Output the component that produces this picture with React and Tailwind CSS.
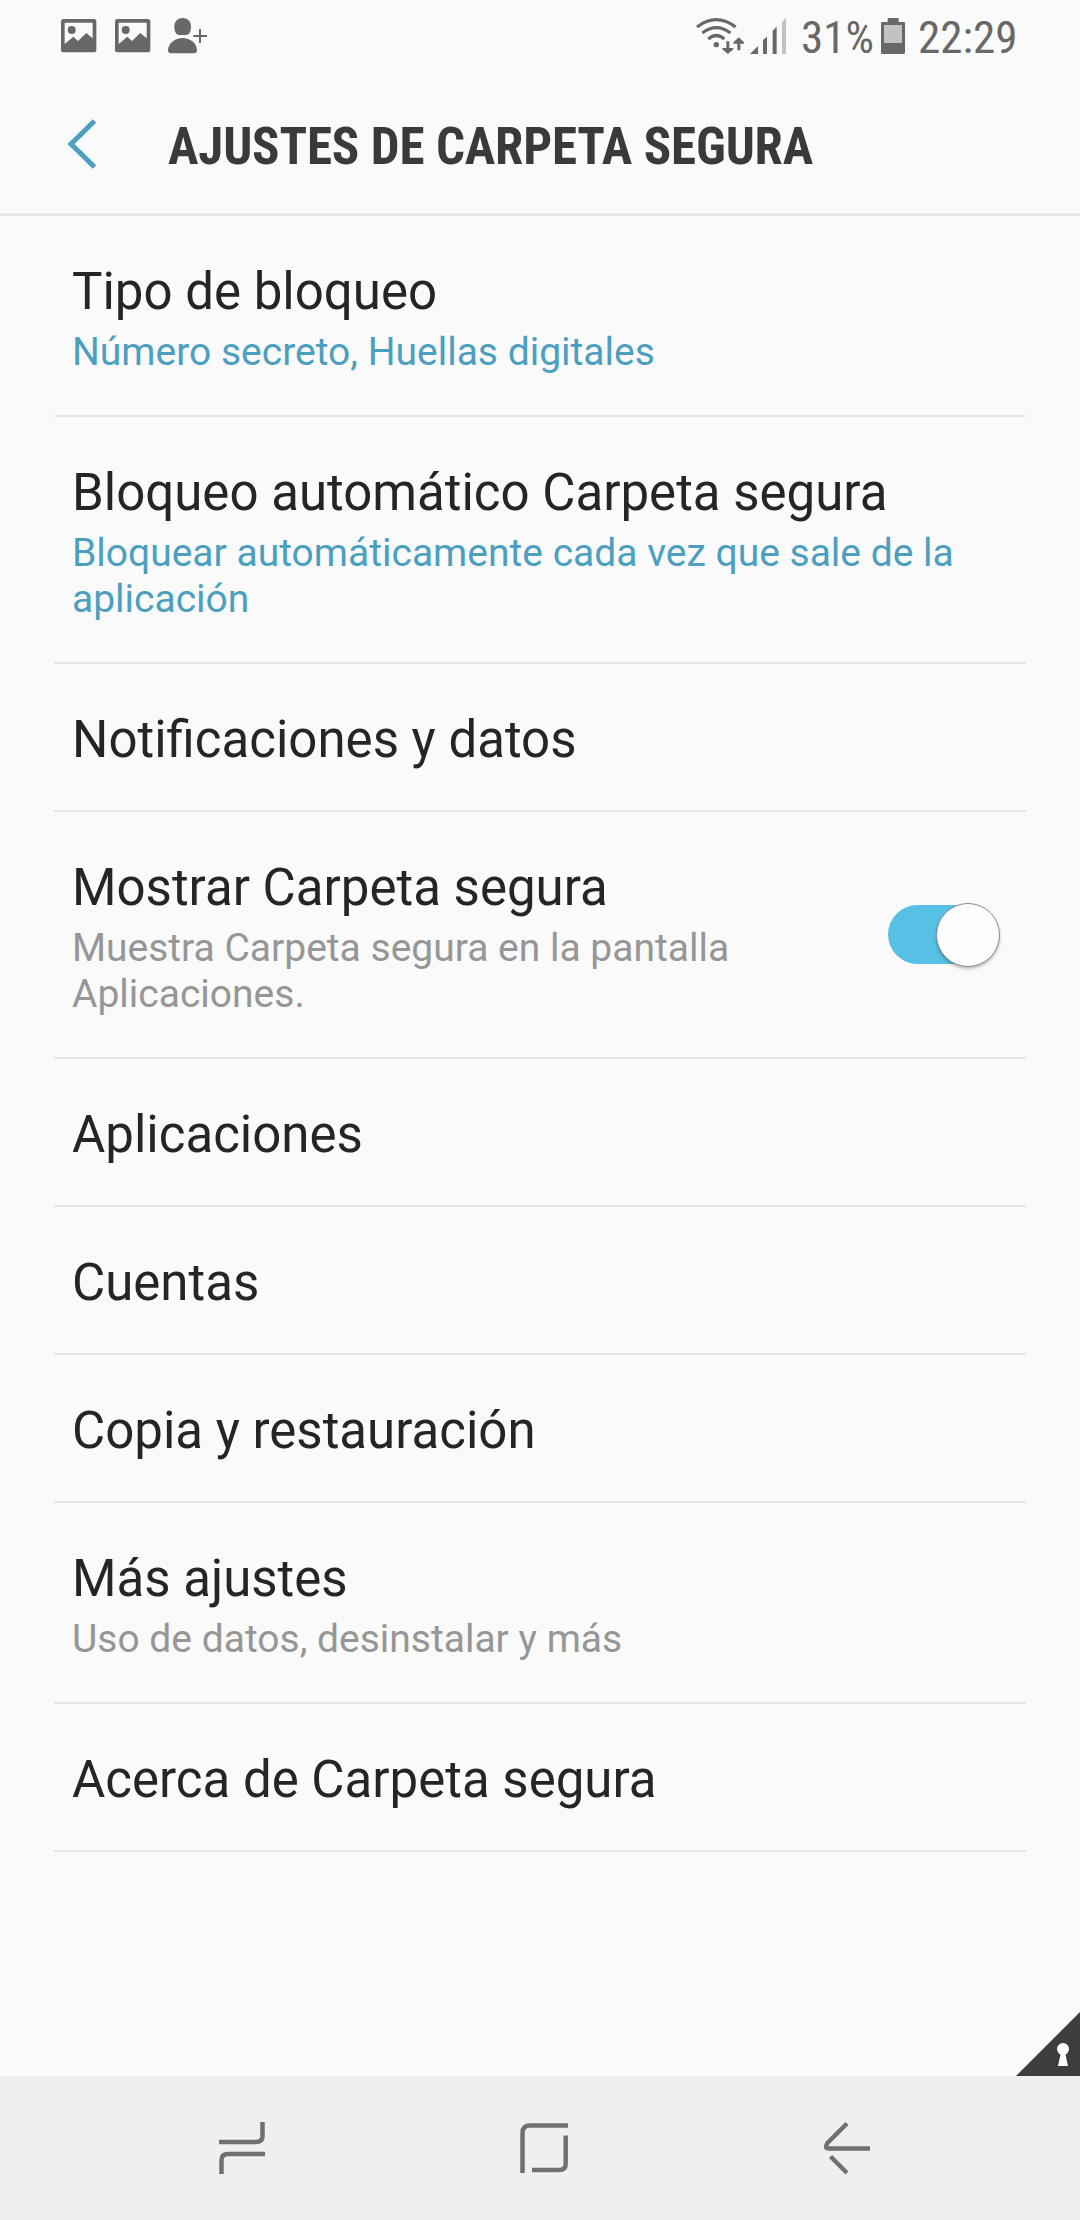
const settings = [
    { title: 'Tipo de bloqueo', sub: 'Número secreto, Huellas digitales', accent: true },
    { title: 'Bloqueo automático Carpeta segura', sub: 'Bloquear automáticamente cada vez que sale de la aplicación', accent: true },
    { title: 'Notificaciones y datos' },
    { title: 'Mostrar Carpeta segura', sub: 'Muestra Carpeta segura en la pantalla Aplicaciones.', toggle: true },
    { title: 'Aplicaciones' },
    { title: 'Cuentas' },
    { title: 'Copia y restauración' },
    { title: 'Más ajustes', sub: 'Uso de datos, desinstalar y más' },
    { title: 'Acerca de Carpeta segura' },
];

function ImageIcon() {
    return (
        <svg width="36" height="34" viewBox="0 0 108 102" className="fill-[#686868]">
            <path fillRule="evenodd" d="M8 0H98Q106 0 106 8V92Q106 100 98 100H8Q0 100 0 92V8Q0 0 8 0ZM11 11V75L37 53L51 66L76 42L95 58V11Z" />
            <circle cx="32" cy="33" r="12" />
        </svg>
    );
}

function AddUserIcon() {
    return (
        <svg width="40" height="36" viewBox="0 0 120 108" className="fill-[#686868]">
            <path d="M44 0C60 0 69 11 69 25C69 40 64 51 55 51H33C24 51 19 40 19 25C19 11 28 0 44 0Z" />
            <path d="M44 60C66 60 87 76 87 97Q87 106 78 106H9Q0 106 0 97C0 76 22 60 44 60Z" />
            <path d="M93 33H99V51H117V57H99V75H93V57H76V51H93Z" />
        </svg>
    );
}

function WifiIcon() {
    return (
        <svg width="48" height="36" viewBox="0 0 144 108" fill="none" stroke="#686868" strokeWidth="9.5">
            <path d="M3 27Q61 -17 119 27" />
            <path d="M19 45Q61 13 103 45" />
            <path d="M37 63Q61 42 85 63" />
            <circle cx="61" cy="80" r="8" fill="#686868" stroke="none" />
            <g fill="#686868" stroke="none">
                <path d="M91 70H100V90H112V94L95.5 108L79 94V90H91Z" />
                <path d="M124 97H133V77H144V73L128.500 58L112 73V77H124Z" />
            </g>
        </svg>
    );
}

function SignalIcon() {
    return (
        <svg width="36" height="36" viewBox="0 0 108 108" className="fill-[#686868]">
            <path d="M0 108L24 84V108Z" />
            <path d="M39 66L51 56V108H39Z" />
            <path d="M68 38L80 26V108H68Z" />
            <path d="M96 12L108 0V108H96Z" className="fill-[#c2c2c2]" />
        </svg>
    );
}

function BatteryIcon() {
    return (
        <svg width="24" height="36" viewBox="0 0 72 108">
            <path d="M20 4Q20 0 24 0H49Q53 0 53 4V12H68Q72 12 72 16V104Q72 108 68 108H4Q0 108 0 104V16Q0 12 4 12H20Z" fill="#686868" />
            <path d="M9 21H63V75H9Z" fill="#c2c2c2" />
        </svg>
    );
}

function StatusBar() {
    return (
        <div className="flex h-[72px] shrink-0 items-start justify-between pl-[61px] pr-[64px] pt-[18px] text-[#686868]">
            <div className="flex items-start">
                <div className="pt-px"><ImageIcon /></div>
                <div className="ml-[18px] pt-px"><ImageIcon /></div>
                <div className="ml-[17px]"><AddUserIcon /></div>
            </div>
            <div className="flex items-start">
                <WifiIcon />
                <div className="ml-[6px]"><SignalIcon /></div>
                <span className="ml-[15px] w-[71px] whitespace-nowrap text-[45px] leading-[39px] [font-stretch:75%]">31%</span>
                <div className="ml-[9px]"><BatteryIcon /></div>
                <span className="ml-[13px] w-[98px] whitespace-nowrap text-[45px] leading-[39px] [font-stretch:75%]">22:29</span>
            </div>
        </div>
    );
}

function Header() {
    return (
        <header className="flex h-[144px] shrink-0 items-center border-b-[3px] border-[#e6e6e6] pl-[67px]">
            <svg width="30" height="50" viewBox="0 0 30 50" fill="none" stroke="#4c9fbf" strokeWidth="5" className="mt-[3px]">
                <path d="M27.500 2L4 25L27.500 48" />
            </svg>
            <h1 className="ml-[71px] whitespace-nowrap pt-[9px] text-[51px] font-bold leading-[60px] tracking-[-0.16px] text-[#3a3a3a] [font-stretch:75%]">
                AJUSTES DE CARPETA SEGURA
            </h1>
        </header>
    );
}

function Toggle() {
    return (
        <div className="flex h-[59px] w-[111px] shrink-0 items-center rounded-full bg-[#57c0e5] pl-[48px]">
            <div className="h-[64px] w-[64px] shrink-0 rounded-full border border-[#8c8c8c] bg-[#fdfdfd] shadow-[0_2px_3px_rgba(0,0,0,0.25)]" />
        </div>
    );
}

function SettingRow({ title, sub, accent, toggle }) {
    return (
        <li className="flex items-center justify-between border-b-2 border-[#e6e6e6] pl-[18px] pr-[27px]">
            <div className={`pb-[40px] pt-[46px] ${toggle ? 'w-[700px]' : 'w-[900px]'}`}>
                <p className="whitespace-nowrap text-[51px] leading-[60px] text-[#252525]">{title}</p>
                {sub && (
                    <p className={`mt-[7px] text-[39px] leading-[46px] ${accent ? 'text-[#4c9fbf]' : 'text-[#969696]'}`}>{sub}</p>
                )}
            </div>
            {toggle && <Toggle />}
        </li>
    );
}

function NavBar() {
    return (
        <nav className="flex h-[144px] shrink-0 items-center bg-[#efefef] pl-[218px]">
            <svg width="48" height="54" viewBox="0 0 48 54" fill="none" stroke="#707070" strokeWidth="4.5">
                <path d="M1 21H38Q44.500 21 44.500 15V1" />
                <path d="M47 33H10Q3.500 33 3.500 39V53" />
            </svg>
            <svg width="50" height="50" viewBox="0 0 50 50" fill="none" stroke="#707070" strokeWidth="4.5" className="ml-[254px]">
                <path d="M2.500 50V10Q2.500 2.500 10 2.500H48" />
                <path d="M12 47H39Q45.700 47 45.700 41V12.500" />
            </svg>
            <svg width="48" height="54" viewBox="0 0 48 54" fill="none" stroke="#707070" strokeWidth="4.5" className="ml-[253px]">
                <path d="M24 2.500L4.500 22Q1 27.500 6 27.500H47" />
                <path d="M7.500 35.500L24 52" />
            </svg>
        </nav>
    );
}

export default function App() {
    return (
        <div className="flex h-[2220px] w-[1080px] flex-col overflow-hidden bg-[#fafafa] font-['Roboto',sans-serif]">
            <StatusBar />
            <Header />
            <main className="flex grow flex-col justify-between">
                <ul className="mx-[54px]">
                    {settings.map((item) => (
                        <SettingRow key={item.title} {...item} />
                    ))}
                </ul>
                {/* secure folder corner mark */}
                <svg width="64" height="64" viewBox="0 0 64 64" className="self-end">
                    <path d="M0 64L64 0V64Z" fill="#3d3d3d" />
                    <circle cx="47" cy="37" r="6" fill="#fff" />
                    <path d="M45 40H49L52 54H42Z" fill="#fff" />
                </svg>
            </main>
            <NavBar />
        </div>
    );
}
